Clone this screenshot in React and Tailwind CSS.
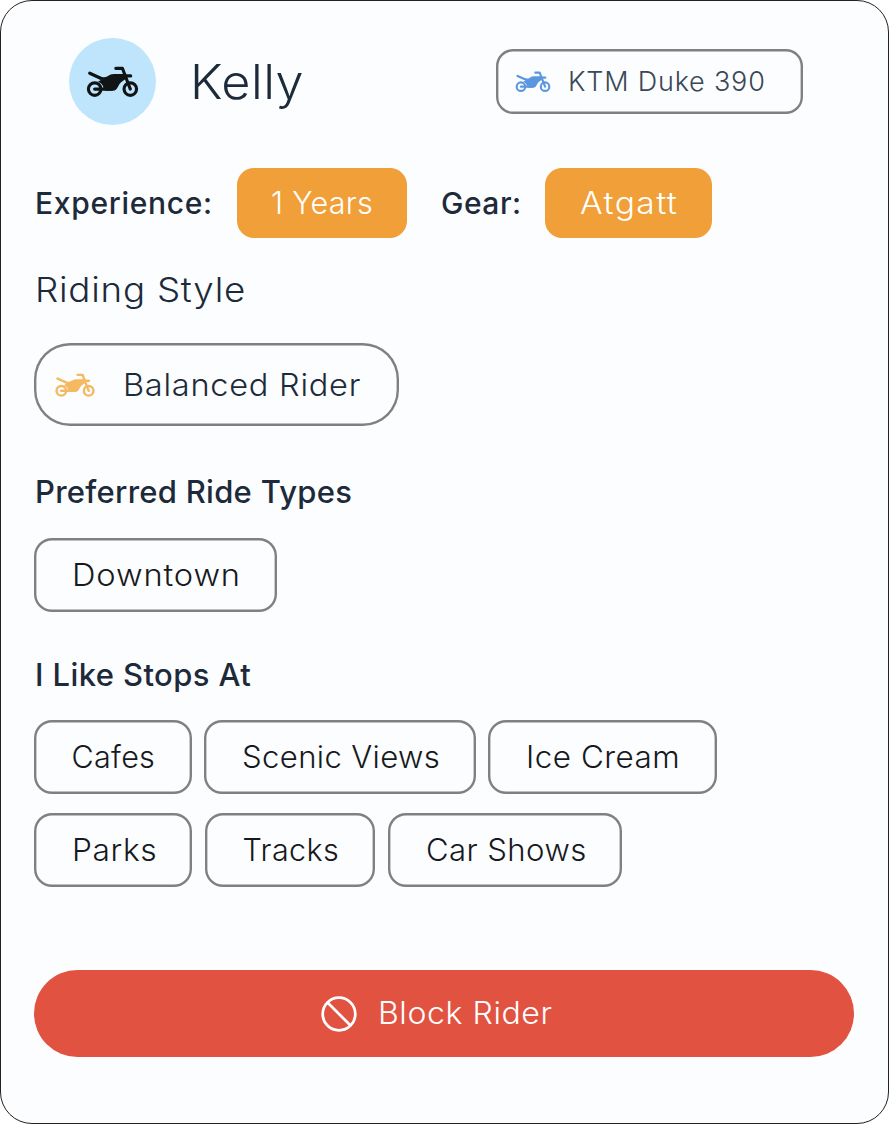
function Motorbike({ className }) {
  return (
    <svg viewBox="18 18 158 94" className={className} fill="none" stroke="currentColor" strokeLinejoin="round" aria-hidden="true">
      <circle cx="43" cy="88" r="19" strokeWidth="9.5" />
      <circle cx="151" cy="88" r="19" strokeWidth="9.5" />
      <path d="M43 88H95" strokeWidth="10" strokeLinecap="round" />
      <path d="M107 25H127L151 88" strokeWidth="9.5" strokeLinecap="round" />
      <path d="M128 48H152" strokeWidth="10" strokeLinecap="round" />
      <path d="M28 40L61 55" strokeWidth="10" strokeLinecap="round" />
      <path d="M56 50Q75 55 83 48Q91 42 101 42H136L140 55L127 64C113 72 114 93 98 93H78C74 92 70 90 70 86C69 76 62 70 53 66L64 59Z" fill="currentColor" stroke="none" />
    </svg>
  );
}

function Text({ className, children }) {
  return <span className={`block origin-left whitespace-nowrap leading-none ${className}`}>{children}</span>;
}

const outline = "shadow-[inset_0_0_0_2.4px_#808080]";

function Chip({ className, text, children }) {
  return (
    <div className={`flex h-[74px] shrink-0 items-center rounded-[18px] pl-[37.5px] ${outline} ${className}`}>
      <Text className={`text-[30.5px] font-light text-[#17191c] ${text}`}>{children}</Text>
    </div>
  );
}

export default function App() {
  return (
    <main className="flex h-[1124px] w-[889px] flex-col rounded-[32px] border border-[#222] bg-[#fcfdff] px-[33px] font-['Inter',sans-serif] text-[#1d2a39]">
      <header className="mt-[37px] flex h-[87px] items-center">
        <div className="ml-[35px] flex size-[87px] items-center justify-center rounded-full bg-[#bfe5fc] text-[#101414]">
          <Motorbike className="h-[31px] w-[53px]" />
        </div>
        <Text className="ml-[34px] w-[305px] scale-x-[1.05] pt-px text-[48px] font-light tracking-[0.5px]">Kelly</Text>
        <div className={`ml-[1px] flex h-[65px] w-[307px] items-center rounded-[17px] pl-[19px] ${outline}`}>
          <Motorbike className="h-[21px] w-[36px] text-[#5b97de]" />
          <Text className="ml-[17px] text-[27px] font-light tracking-[0.8px] text-[#3a4756]">KTM Duke 390</Text>
        </div>
      </header>

      <section className="mt-[43px] flex h-[70px] items-center">
        <Text className="w-[203px] pl-px text-[30px] font-medium tracking-[0.7px]">Experience:</Text>
        <div className="flex h-[70px] w-[170px] items-center rounded-[17px] bg-[#f19f39] pl-[34px]">
          <Text className="text-[30.5px] font-light tracking-[0.3px] text-white">1 Years</Text>
        </div>
        <Text className="ml-[34px] w-[104px] text-[30px] font-medium tracking-[0.5px]">Gear:</Text>
        <div className="flex h-[70px] w-[167px] items-center rounded-[17px] bg-[#f19f39] pl-[35px]">
          <Text className="scale-x-[1.1] text-[30.5px] font-light tracking-[1.3px] text-white">Atgatt</Text>
        </div>
      </section>

      <Text className="mt-[35px] ml-px h-[35px] w-[200px] scale-x-[1.08] text-[34px] font-light tracking-[0.7px]">Riding Style</Text>
      <div className={`mt-[35px] flex h-[83px] w-[365px] items-center rounded-[36px] pl-[21px] ${outline}`}>
        <Motorbike className="h-[24px] w-[40px] text-[#f5b962]" />
        <Text className="ml-[28px] scale-x-[1.05] text-[31px] font-light tracking-[0.7px]">Balanced Rider</Text>
      </div>

      <Text className="mt-[50px] h-[31px] pl-px text-[31px] font-medium tracking-[0.27px]">Preferred Ride Types</Text>
      <div className="mt-[31px] flex">
        <Chip className="w-[243px]" text="scale-x-[1.07] tracking-[0.8px]">Downtown</Chip>
      </div>

      <Text className="mt-[47px] h-[31px] pl-px text-[31px] font-medium tracking-[0.4px]">I Like Stops At</Text>
      <div className="mt-[30px] flex gap-[12px]">
        <Chip className="w-[158px]" text="tracking-[0.3px]">Cafes</Chip>
        <Chip className="w-[272px]" text="scale-x-[1.02] tracking-[0.35px]">Scenic Views</Chip>
        <Chip className="w-[229px]" text="scale-x-[1.03] tracking-[0.5px]">Ice Cream</Chip>
      </div>
      <div className="mt-[19px] flex gap-[13px]">
        <Chip className="w-[158px]" text="scale-x-[1.04] tracking-[0.6px]">Parks</Chip>
        <Chip className="w-[170px]" text="tracking-[0.4px]">Tracks</Chip>
        <Chip className="w-[234px]" text="scale-x-[1.02] tracking-[0.4px]">Car Shows</Chip>
      </div>

      <button className="mt-[83px] flex h-[87px] w-[820px] items-center rounded-full bg-[#e15241] pl-[287px] text-white">
        <svg viewBox="0 0 36 36" className="size-[36px]" fill="none" stroke="currentColor" strokeWidth="2.7" aria-hidden="true">
          <circle cx="18" cy="18" r="16.3" />
          <path d="M6.5 6.5L29.5 29.5" />
        </svg>
        <Text className="ml-[21px] scale-x-[1.05] text-[30.5px] font-light tracking-[0.55px]">Block Rider</Text>
      </button>
    </main>
  );
}
